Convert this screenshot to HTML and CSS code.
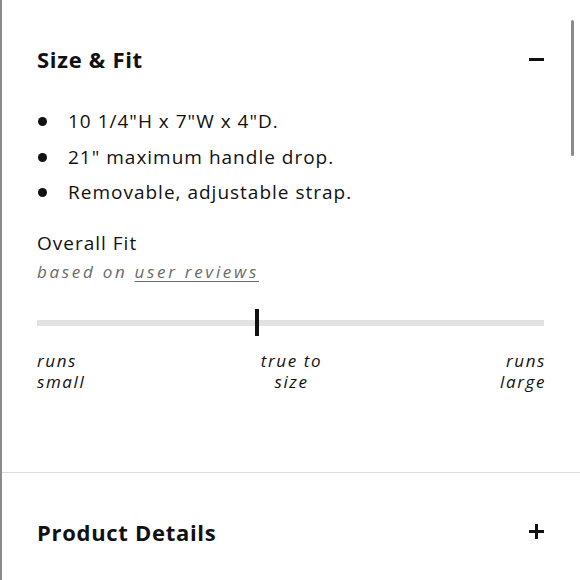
FILE: index.html
```html
<!DOCTYPE html>
<html lang="en">
<head>
  <meta charset="UTF-8">
  <meta name="viewport" content="width=device-width, initial-scale=1.0">
  <title>Size &amp; Fit</title>
  <link rel="stylesheet" href="styles.css">
</head>
<body>
  <div class="panel">
    <div class="scrollbar"></div>

    <section class="accordion open">
      <div class="accordion-head">
        <h2>Size &amp; Fit</h2>
        <span class="toggle minus"></span>
      </div>

      <ul class="specs">
        <li>10 1/4"H x 7"W x 4"D.</li>
        <li>21" maximum handle drop.</li>
        <li>Removable, adjustable strap.</li>
      </ul>

      <div class="fit">
        <h3>Overall Fit</h3>
        <p class="fit-source">based on <a href="#">user reviews</a></p>

        <div class="fit-scale">
          <div class="fit-track"></div>
          <div class="fit-marker" style="left: 43.4%"></div>
        </div>

        <div class="fit-labels">
          <span class="lbl-left">runs<br>small</span>
          <span class="lbl-center">true to<br>size</span>
          <span class="lbl-right">runs<br>large</span>
        </div>
      </div>
    </section>

    <section class="accordion">
      <div class="accordion-head">
        <h2>Product Details</h2>
        <span class="toggle plus"></span>
      </div>
    </section>
  </div>
</body>
</html>
```

FILE: styles.css
```css
* {
  box-sizing: border-box;
}
body {
  margin: 0;
  font-family: 'Open Sans', 'Noto Sans', sans-serif;
  color: #111;
  background: #fff;
}
.panel {
  position: relative;
  min-height: 580px;
  border-left: 2px solid #8a8a8a;
}
.scrollbar {
  position: absolute;
  top: 20px;
  right: 6px;
  width: 3px;
  height: 136px;
  border-radius: 2px;
  background: #8a8a8a;
}
.accordion {
  padding: 45px 36px 0 35px;
}
.accordion.open {
  padding-bottom: 80px;
  border-bottom: 1px solid #dcdcdc;
}
.accordion-head {
  display: flex;
  justify-content: space-between;
  align-items: center;
  height: 28px;
}
.accordion-head h2 {
  margin: 0;
  font-size: 22px;
  font-weight: 700;
  line-height: 28px;
  letter-spacing: 0.7px;
}
.toggle {
  position: relative;
  width: 15px;
  height: 15px;
}
.toggle::before,
.toggle::after {
  content: "";
  position: absolute;
  background: #111;
}
.toggle::before {
  left: 0;
  right: 0;
  top: 6px;
  height: 3px;
}
.plus::after {
  top: 0;
  bottom: 0;
  left: 6px;
  width: 3px;
}
.specs {
  list-style: none;
  margin: 31px 0 0;
  padding: 0;
}
.specs li {
  position: relative;
  padding-left: 31px;
  font-size: 19px;
  line-height: 35.5px;
  letter-spacing: 1px;
}
.specs li::before {
  content: "";
  position: absolute;
  left: 1px;
  top: 13px;
  width: 9px;
  height: 9px;
  border-radius: 50%;
  background: #111;
}
.fit {
  margin-top: 20px;
}
.fit h3 {
  margin: 0;
  font-size: 19px;
  font-weight: 400;
  line-height: 24px;
  letter-spacing: 1px;
}
.fit-source {
  margin: 5px 0 0;
  font-size: 17px;
  font-style: italic;
  line-height: 24px;
  letter-spacing: 2.7px;
  color: #6a6a6a;
}
.fit-source a {
  color: #6a6a6a;
  text-decoration: underline;
  text-underline-offset: 3px;
}
.fit-scale {
  position: relative;
  height: 27px;
  margin-top: 25px;
}
.fit-track {
  position: absolute;
  left: 0;
  right: 0;
  top: 11px;
  height: 6px;
  background: #e2e2e2;
}
.fit-marker {
  position: absolute;
  top: 0;
  width: 4px;
  height: 27px;
  margin-left: -2px;
  background: #111;
}
.fit-labels {
  display: grid;
  grid-template-columns: 1fr 1fr 1fr;
  margin-top: 14px;
  margin-right: -2px;
  font-size: 17px;
  font-style: italic;
  line-height: 21px;
  letter-spacing: 1.6px;
}
.lbl-center {
  text-align: center;
}
.lbl-right {
  text-align: right;
}
```
